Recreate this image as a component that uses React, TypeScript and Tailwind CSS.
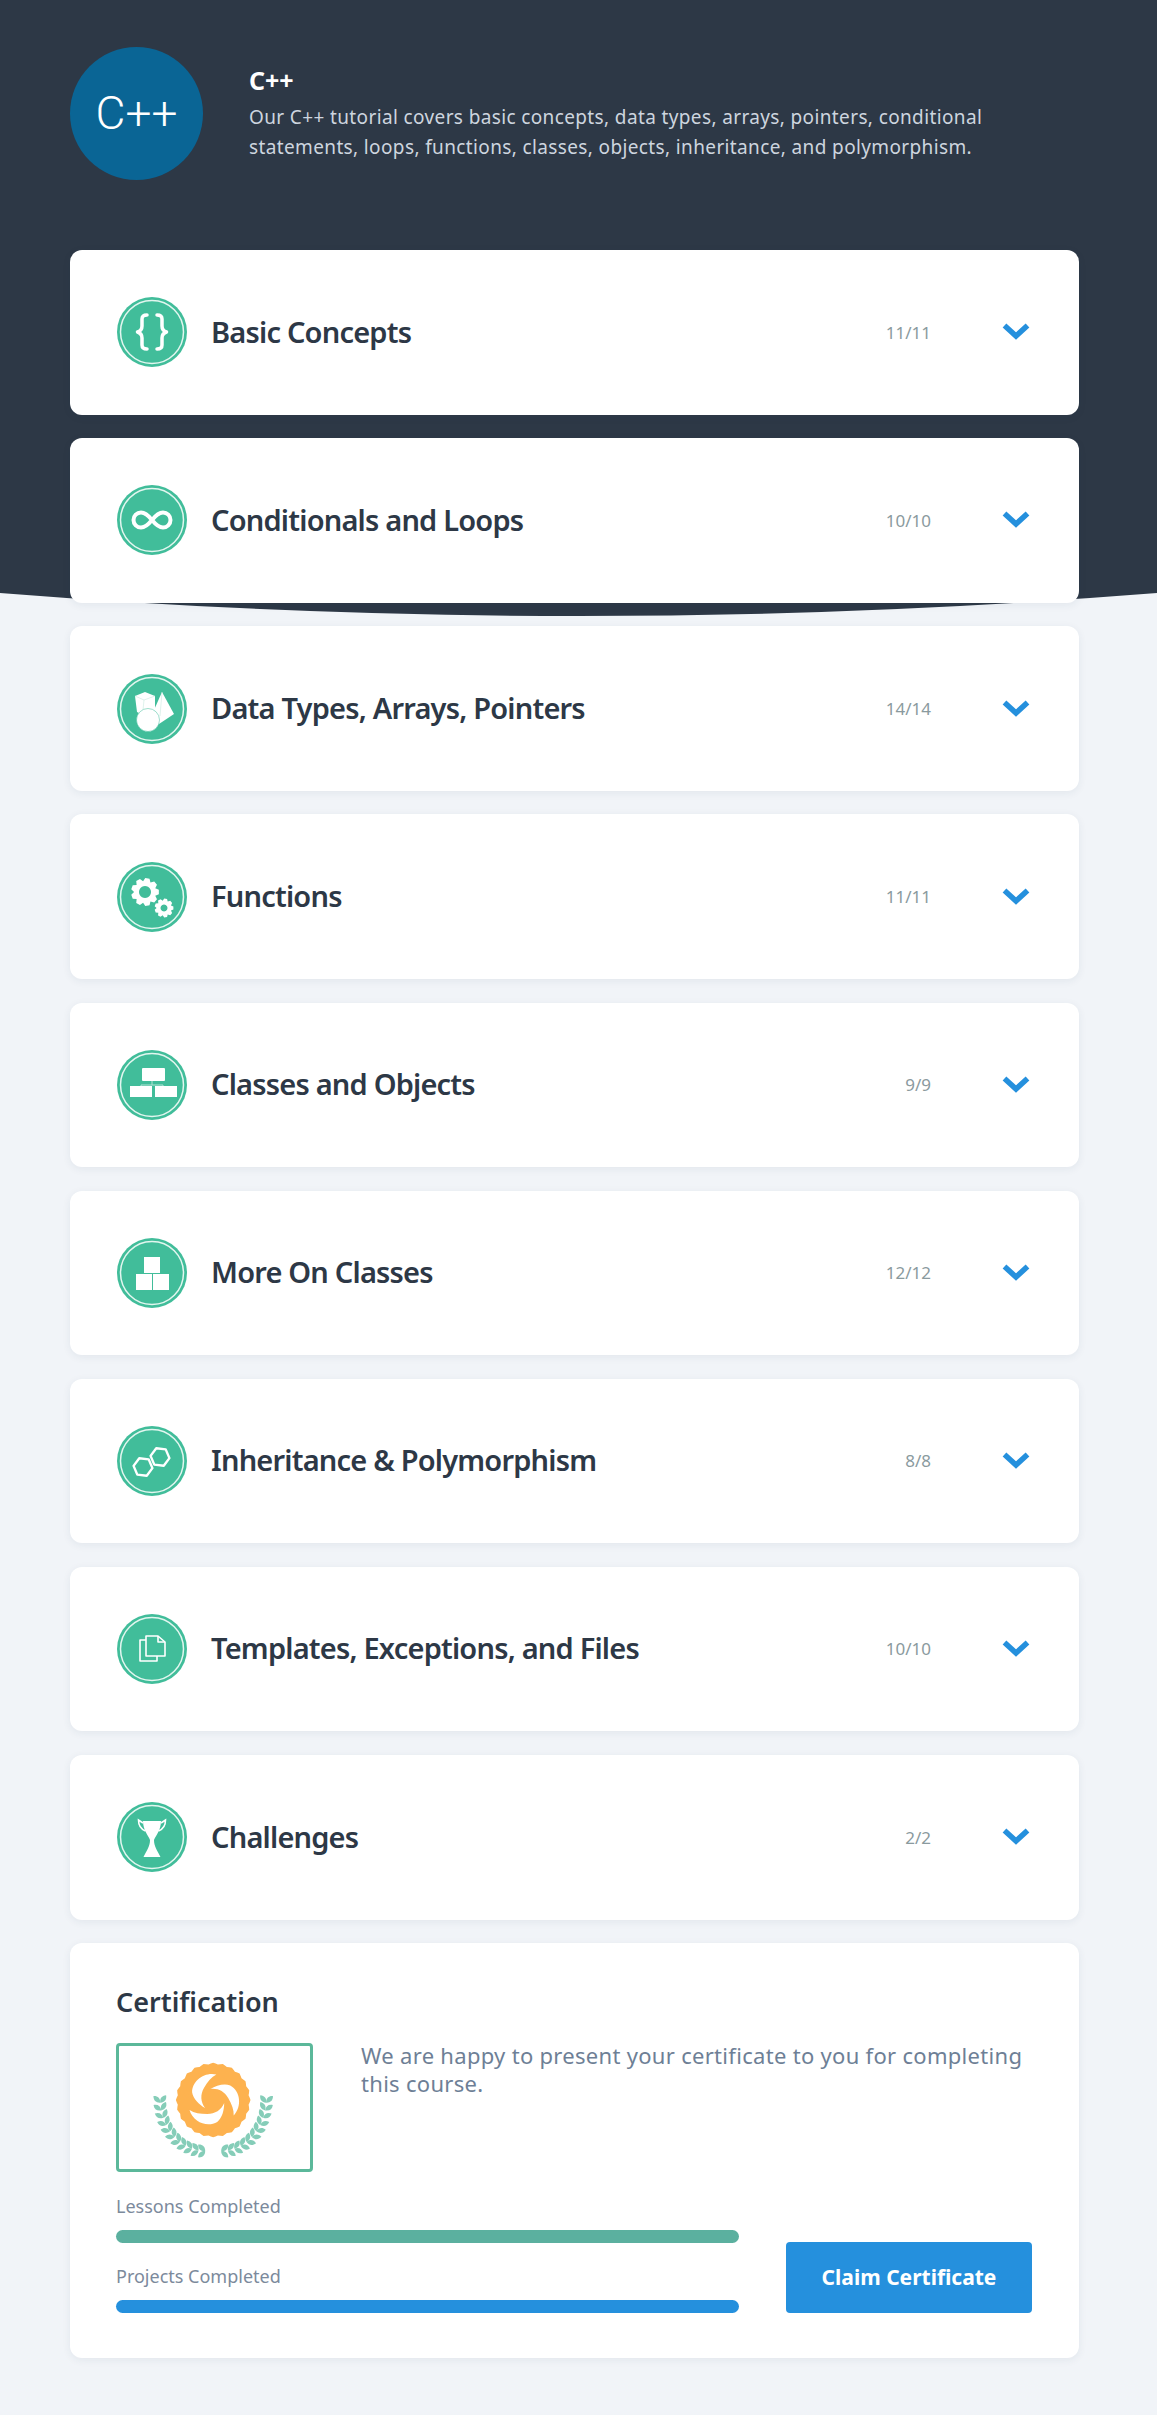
const font = "font-['Noto_Sans','Liberation_Sans',sans-serif]";

const gearPath = (cx: number, cy: number, r: number, teeth: number) => {
  const pts: string[] = [];
  const inner = r * 0.78;
  for (let i = 0; i < teeth; i++) {
    const a = (i / teeth) * Math.PI * 2;
    const w = (Math.PI * 2) / teeth;
    const steps: [number, number][] = [
      [inner, a - w * 0.5],
      [r, a - w * 0.22],
      [r, a + w * 0.22],
      [inner, a + w * 0.5],
    ];
    steps.forEach(([rr, t]) => pts.push(`${(cx + rr * Math.cos(t)).toFixed(2)} ${(cy + rr * Math.sin(t)).toFixed(2)}`));
  }
  return "M" + pts.join("L") + "Z";
};

const hexPath = (cx: number, cy: number, r: number) => {
  const pts: string[] = [];
  for (let i = 0; i < 6; i++) {
    const t = (Math.PI / 3) * i + 0.12;
    pts.push(`${(cx + r * Math.cos(t)).toFixed(2)} ${(cy + r * Math.sin(t)).toFixed(2)}`);
  }
  return "M" + pts.join("L") + "Z";
};

const icons: Record<string, React.ReactNode> = {
  braces: (
    <g fill="none" stroke="#fff" strokeWidth="3.500" strokeLinecap="round" strokeLinejoin="round">
      <path d="M30 18c-3.500 0-5 1.500-5 4v7c0 3-1.500 5-4.500 6 3 1 4.500 3 4.500 6v7c0 2.500 1.500 4 5 4" />
      <path d="M40 18c3.500 0 5 1.500 5 4v7c0 3 1.500 5 4.500 6-3 1-4.500 3-4.500 6v7c0 2.500-1.500 4-5 4" />
    </g>
  ),
  infinity: (
    <path
      d="M35 35c-4-5-7-7.500-11-7.500a7.500 7.500 0 0 0 0 15c4 0 7-2.500 11-7.500s7-7.500 11-7.500a7.500 7.500 0 0 1 0 15c-4 0-7-2.500-11-7.500Z"
      fill="none"
      stroke="#fff"
      strokeWidth="4"
    />
  ),
  shapes: (
    <g fill="#fff">
      <path d="M18 22l10-4 10 4v14l-10 6-8-4z" />
      <path d="M45 18l12 22-15 10-5-14z" />
      <path d="M18 22l9 4 11-4M27 26l-1 10M45 18l-2 24" fill="none" stroke="#c9eadf" strokeWidth="0.600" />
      <circle cx="31" cy="46" r="11.500" stroke="#41bd9a" strokeWidth="0.500" />
    </g>
  ),
  gears: (
    <g fill="#fff" fillRule="evenodd">
      <path d={gearPath(28, 30, 14, 9) + "M28 24a6 6 0 1 0 0.010 0Z"} />
      <path d={gearPath(47, 46, 9.500, 9) + "M47 42.500a3.500 3.500 0 1 0 0.010 0Z"} />
    </g>
  ),
  blocks: (
    <g>
      <path d="M35 30v5M24 35h22M24 35v2M46 35v2" fill="none" stroke="#b5e3d5" strokeWidth="1" />
      <g fill="#fff">
        <rect x="25" y="18" width="23" height="13" rx="1" />
        <rect x="13" y="36" width="22" height="11" />
        <rect x="38" y="36" width="22" height="11" />
      </g>
    </g>
  ),
  cubes: (
    <g fill="#fff">
      <rect x="27" y="19" width="16" height="16" />
      <rect x="19" y="36" width="16" height="16" />
      <rect x="36" y="36" width="16" height="16" />
    </g>
  ),
  hexagons: (
    <g fill="none" stroke="#fff" strokeWidth="2.400" strokeLinejoin="round">
      <path d={hexPath(26, 41, 9.500)} />
      <path d={hexPath(43, 31, 9.500)} />
    </g>
  ),
  files: (
    <g fill="none" stroke="#fff" strokeWidth="1.600" strokeLinejoin="round">
      <path d="M29 26h-6v21h17v-5" />
      <path d="M29 22h12l7 6v14H29z" />
      <path d="M41 22v6h7" />
    </g>
  ),
  trophy: (
    <g>
      <path d="M26 19h18c0 9-5 14-7 19h-4c-2-5-7-10-7-19Z" fill="#fff" />
      <path d="M26 21l-4.500-3c0 6 2 9 7 11M44 21l4.500-3c0 6-2 9-7 11" fill="none" stroke="#fff" strokeWidth="1.600" />
      <path d="M33 38h4c0 6 3 10 6.500 17h-17c3.500-7 6.500-11 6.500-17Z" fill="#fff" />
    </g>
  ),
};

function RowIcon({ name }: { name: string }) {
  return (
    <svg viewBox="0 0 70 70" className="w-[70px] h-[70px] shrink-0">
      <circle cx="35" cy="35" r="35" fill="#41bd9a" />
      <circle cx="35" cy="35" r="31.500" fill="none" stroke="#e2f6ef" strokeWidth="1.500" />
      {icons[name]}
    </svg>
  );
}

function Chevron() {
  return (
    <svg viewBox="0 0 30 20" className="w-[30px] h-[20px] shrink-0">
      <path d="M3.500 3.500 15 14 26.500 3.500" fill="none" stroke="#2590dd" strokeWidth="5.500" />
    </svg>
  );
}

function Seal() {
  const leaves: React.ReactNode[] = [];
  [-1, 1].forEach((side) => {
    for (let i = 0; i < 11; i++) {
      const t = (i / 10) * 1.5;
      const x = 96.700 + side * (8 + Math.sin(t) * 45);
      const y = 56 + Math.cos(t) * 52;
      const rot = side * (90 - t * 57.3);
      leaves.push(
        <g key={`${side}-${i}`} transform={`translate(${x.toFixed(1)} ${y.toFixed(1)}) rotate(${rot.toFixed(1)})`}>
          <path d="M0 0c3.200-3 3.200-6.500 0-9.500-3.200 3-3.200 6.500 0 9.500Z" transform="rotate(42)" fill="#85cdb8" />
          <path d="M0 0c3.200-3 3.200-6.500 0-9.500-3.200 3-3.200 6.500 0 9.500Z" transform="rotate(-42)" fill="#85cdb8" />
        </g>,
      );
    }
  });
  const scallop: string[] = [];
  for (let i = 0; i < 96; i++) {
    const a = (i / 96) * Math.PI * 2;
    const r = 36.500 + Math.cos(a * 24) * 0.8;
    scallop.push(`${(96.700 + r * Math.cos(a)).toFixed(2)} ${(57 + r * Math.sin(a)).toFixed(2)}`);
  }
  return (
    <svg viewBox="3 3 190 123" className="w-full h-full">
      {leaves}
      <path d={"M" + scallop.join("L") + "Z"} fill="#fdb24f" />
      <g transform="translate(96.700 57)">
        {[0, 120, 240].map((deg) => (
          <path
            key={deg}
            transform={`rotate(${deg})`}
            d="M-23.700 10C-20 22-6 28 4 22 9 18 11 10 11 3 8 10 2 14-6 14-13 14-19 13-23.700 10Z"
            fill="#fff"
          />
        ))}
      </g>
    </svg>
  );
}

const rows = [
  { title: "Basic Concepts", count: "11/11", icon: "braces" },
  { title: "Conditionals and Loops", count: "10/10", icon: "infinity" },
  { title: "Data Types, Arrays, Pointers", count: "14/14", icon: "shapes" },
  { title: "Functions", count: "11/11", icon: "gears" },
  { title: "Classes and Objects", count: "9/9", icon: "blocks" },
  { title: "More On Classes", count: "12/12", icon: "cubes" },
  { title: "Inheritance & Polymorphism", count: "8/8", icon: "hexagons" },
  { title: "Templates, Exceptions, and Files", count: "10/10", icon: "files" },
  { title: "Challenges", count: "2/2", icon: "trophy" },
];

export default function App() {
  return (
    <div className={`relative min-h-[2415px] bg-[#f1f4f8] ${font}`}>
      <div className="absolute inset-x-0 top-0">
        <div className="h-[593px] bg-[#2d3846]" />
        <svg viewBox="0 0 1157 24" preserveAspectRatio="none" className="block w-full h-[24px]">
          <path d="M0 0Q578.500 46 1157 0Z" fill="#2d3846" />
        </svg>
      </div>

      <div className="relative pl-[70px] pr-[78px] pt-[47px] pb-[57px]">
        <div className="flex items-center mb-[70px]">
          <div className="w-[133px] h-[133px] rounded-full bg-[#0a6595] flex items-center justify-center">
            <span className="text-white text-[46px] font-['Roboto',sans-serif] font-light">C++</span>
          </div>
          <div className="ml-[46px]">
            <h1 className="text-white text-[25px] font-bold leading-[30px]">C++</h1>
            <p className="text-[#cdd5df] text-[19px] tracking-[0.37px] leading-[30px] mt-[7px] w-[770px]">
              Our C++ tutorial covers basic concepts, data types, arrays, pointers, conditional statements, loops, functions, classes, objects, inheritance, and polymorphism.
            </p>
          </div>
        </div>

        <div className="flex flex-col gap-[23.625px]">
          {rows.map((row) => (
            <div key={row.title} className="flex items-center h-[164.5px] rounded-xl bg-white pl-[47px] pr-[48px] shadow-[0_2px_8px_rgba(30,50,80,0.07)]">
              <RowIcon name={row.icon} />
              <div className="ml-6 flex-1 -mt-[2px] text-[29px] tracking-[-0.8px] font-semibold text-[#2d3846]">{row.title}</div>
              <div className="text-[17px] text-[#8a9a9e] mr-[70px]">{row.count}</div>
              <Chevron />
            </div>
          ))}

          <div className="h-[415px] rounded-xl bg-white px-[46px] pt-[39px] shadow-[0_2px_8px_rgba(30,50,80,0.07)]">
            <h2 className="text-[27px] leading-[40px] font-semibold text-[#2d3846]">Certification</h2>
            <div className="flex mt-[21px]">
              <div className="w-[197px] h-[129px] border-[3px] border-[#5bb89a] rounded-[4px] shrink-0">
                <Seal />
              </div>
              <p className="ml-[48px] text-[22px] tracking-[0.3px] leading-[28px] text-[#6e7f96] w-[680px] -mt-[2px]">
                We are happy to present your certificate to you for completing this course.
              </p>
            </div>
            <div className="flex items-end mt-[20px]">
              <div className="w-[623px]">
                <div className="text-[18px] leading-[28px] text-[#7c8a9c]">Lessons Completed</div>
                <div className="h-[13px] rounded-full bg-[#5bb09f] mt-[10px]" />
                <div className="text-[18px] leading-[28px] text-[#7c8a9c] mt-[19px]">Projects Completed</div>
                <div className="h-[13px] rounded-full bg-[#2590dd] mt-[10px]" />
              </div>
              <button className="ml-[47px] w-[246px] h-[71px] rounded-[4px] bg-[#2590dd] text-white text-[21px] font-bold">
                Claim Certificate
              </button>
            </div>
          </div>
        </div>
      </div>
    </div>
  );
}
